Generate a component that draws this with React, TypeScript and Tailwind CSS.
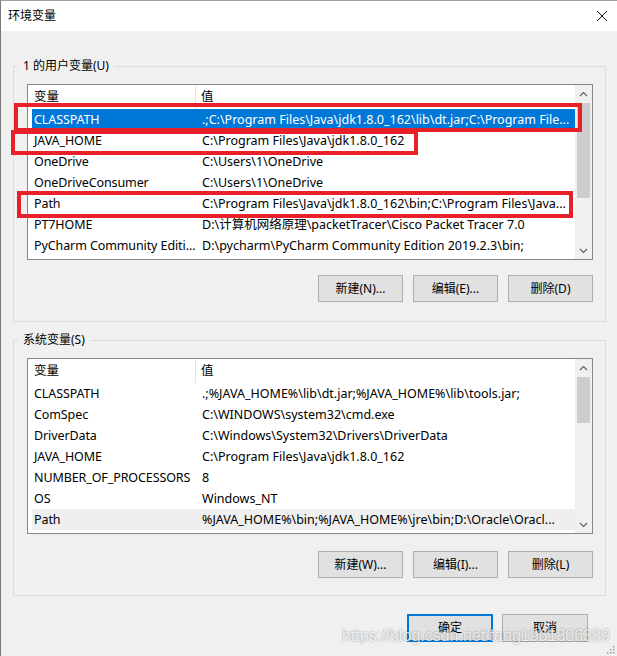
import type { ReactNode } from 'react';

type Row = { name: string; value: string };

const USER_ROWS: Row[] = [
  { name: 'CLASSPATH', value: '.;C:\\Program Files\\Java\\jdk1.8.0_162\\lib\\dt.jar;C:\\Program File...' },
  { name: 'JAVA_HOME', value: 'C:\\Program Files\\Java\\jdk1.8.0_162' },
  { name: 'OneDrive', value: 'C:\\Users\\1\\OneDrive' },
  { name: 'OneDriveConsumer', value: 'C:\\Users\\1\\OneDrive' },
  { name: 'Path', value: 'C:\\Program Files\\Java\\jdk1.8.0_162\\bin;C:\\Program Files\\Java...' },
  { name: 'PT7HOME', value: 'D:\\计算机网络原理\\packetTracer\\Cisco Packet Tracer 7.0' },
  { name: 'PyCharm Community Editi...', value: 'D:\\pycharm\\PyCharm Community Edition 2019.2.3\\bin;' },
];

const SYSTEM_ROWS: Row[] = [
  { name: 'CLASSPATH', value: '.;%JAVA_HOME%\\lib\\dt.jar;%JAVA_HOME%\\lib\\tools.jar;' },
  { name: 'ComSpec', value: 'C:\\WINDOWS\\system32\\cmd.exe' },
  { name: 'DriverData', value: 'C:\\Windows\\System32\\Drivers\\DriverData' },
  { name: 'JAVA_HOME', value: 'C:\\Program Files\\Java\\jdk1.8.0_162' },
  { name: 'NUMBER_OF_PROCESSORS', value: '8' },
  { name: 'OS', value: 'Windows_NT' },
  { name: 'Path', value: '%JAVA_HOME%\\bin;%JAVA_HOME%\\jre\\bin;D:\\Oracle\\Oracl...' },
];

function Chevron({ down = false }: { down?: boolean }) {
  return (
    <svg width="9" height="6" viewBox="0 0 9 6" className={down ? 'rotate-180' : ''}>
      <polyline points="1,5 4.5,1.5 8,5" fill="none" stroke="#606060" strokeWidth="1.2" />
    </svg>
  );
}

function Scrollbar({ thumbTop, thumbHeight }: { thumbTop: number; thumbHeight: number }) {
  return (
    <div className="flex w-[17px] flex-col bg-[#f0f0f0]">
      <div className="flex h-[17px] items-center justify-center">
        <Chevron />
      </div>
      <div className="flex-1">
        <div className="mx-[2px] bg-[#cdcdcd]" style={{ marginTop: thumbTop, height: thumbHeight }} />
      </div>
      <div className="flex h-[17px] items-center justify-center">
        <Chevron down />
      </div>
    </div>
  );
}

function VarList({
  rows,
  selected,
  hovered,
  thumbTop,
  thumbHeight,
}: {
  rows: Row[];
  selected?: number;
  hovered?: number;
  thumbTop: number;
  thumbHeight: number;
}) {
  return (
    <div className="flex h-[176px] border border-[#828790] bg-white">
      <div className="flex min-w-0 flex-1 flex-col text-[12.5px]">
        <div className="flex h-[24px] items-center pt-[1px]">
          <div className="flex h-full w-[168px] items-center border-r border-[#e5e5e5] pl-[6px]">变量</div>
          <div className="pl-[5px]">值</div>
        </div>
        {rows.map((r, i) => {
          const bg = i === selected ? 'bg-[#0078d7] text-white' : i === hovered ? 'bg-[#efefef]' : '';
          return (
            <div key={r.name + i} className={`ml-[4px] flex h-[21px] items-center pt-[1px] ${bg}`}>
              <div className="w-[164px] shrink-0 whitespace-nowrap pl-[2px] tracking-[-0.1px]">{r.name}</div>
              <div className="min-w-0 flex-1 overflow-hidden whitespace-nowrap pl-[6px]">{r.value}</div>
            </div>
          );
        })}
      </div>
      <Scrollbar thumbTop={thumbTop} thumbHeight={thumbHeight} />
    </div>
  );
}

function Button({ children, primary = false, className = '' }: { children: ReactNode; primary?: boolean; className?: string }) {
  return (
    <button
      className={`flex items-center justify-center bg-[#e1e1e1] ${
        primary ? 'border-2 border-[#0078d7]' : 'border border-[#adadad]'
      } ${className}`}
    >
      {children}
    </button>
  );
}

function GroupBox({
  label,
  children,
  className = '',
}: {
  label: string;
  children: ReactNode;
  className?: string;
}) {
  return (
    <div className={`relative ml-[12px] w-[593px] border border-[#dcdcdc] pl-[13px] pr-[12px] pt-[17px] ${className}`}>
      <span className="absolute -top-[9px] left-[4px] bg-[#f0f0f0] px-[5px] leading-[16px]">{label}</span>
      {children}
    </div>
  );
}

const RED_BOXES = [
  { left: 13, top: 102, width: 568, height: 29 },
  { left: 10, top: 129, width: 407, height: 25 },
  { left: 16, top: 190, width: 556, height: 27 },
];

export default function App() {
  return (
    <div className="relative h-[656px] w-[617px] overflow-hidden border-l border-t border-l-[#7a7a7a] border-t-[#a0a0a0] bg-[#f0f0f0] font-['Noto_Sans','Noto_Sans_CJK_SC',sans-serif] text-[12px] text-black">
      {/* title bar */}
      <div className="flex h-[30px] items-center justify-between bg-white pl-[7px] pr-[9px]">
        <span>环境变量</span>
        <svg width="12" height="12" viewBox="0 0 12 12">
          <path d="M1 1 L11 11 M11 1 L1 11" stroke="#111" strokeWidth="1" />
        </svg>
      </div>

      <GroupBox label="1 的用户变量(U)" className="mt-[35px] pb-[19px]">
        <VarList rows={USER_ROWS} selected={0} thumbTop={1} thumbHeight={95} />
        <div className="mt-[15px] flex justify-end gap-[10px]">
          <Button className="h-[27px] w-[85px]">新建(N)...</Button>
          <Button className="h-[27px] w-[85px]">编辑(E)...</Button>
          <Button className="h-[27px] w-[85px]">删除(D)</Button>
        </div>
      </GroupBox>

      <GroupBox label="系统变量(S)" className="mt-[18px] pb-[17px]">
        <VarList rows={SYSTEM_ROWS} hovered={6} thumbTop={1} thumbHeight={46} />
        <div className="mt-[17px] flex justify-end gap-[10px]">
          <Button className="h-[27px] w-[85px]">新建(W)...</Button>
          <Button className="h-[27px] w-[85px]">编辑(I)...</Button>
          <Button className="h-[27px] w-[85px]">删除(L)</Button>
        </div>
      </GroupBox>

      <div className="ml-[12px] mt-[18px] flex w-[593px] justify-end gap-[9px] pr-[18px]">
        <Button primary className="h-[28px] w-[86px]">确定</Button>
        <Button className="h-[28px] w-[86px]">取消</Button>
      </div>

      {/* red annotation boxes */}
      {RED_BOXES.map((b, i) => (
        <div
          key={i}
          className="pointer-events-none absolute border-[4px] border-[#e8202a]"
          style={{ left: b.left, top: b.top, width: b.width, height: b.height }}
        />
      ))}

      {/* watermark */}
      <div className="pointer-events-none absolute left-[341px] top-[625px] font-['Liberation_Sans',sans-serif] text-[16px] leading-[20px] text-white/80 [text-shadow:0_0_2px_rgba(0,0,0,0.45)]">
        https://blog.csdn.net/fang1961806389
      </div>

      {/* resize grip */}
      <svg className="absolute bottom-[2px] right-[2px]" width="10" height="10" viewBox="0 0 10 10">
        {[
          [8, 2],
          [5, 5],
          [8, 5],
          [2, 8],
          [5, 8],
          [8, 8],
        ].map(([x, y], i) => (
          <rect key={i} x={x} y={y} width="1.5" height="1.5" fill="#9a9a9a" />
        ))}
      </svg>
    </div>
  );
}
